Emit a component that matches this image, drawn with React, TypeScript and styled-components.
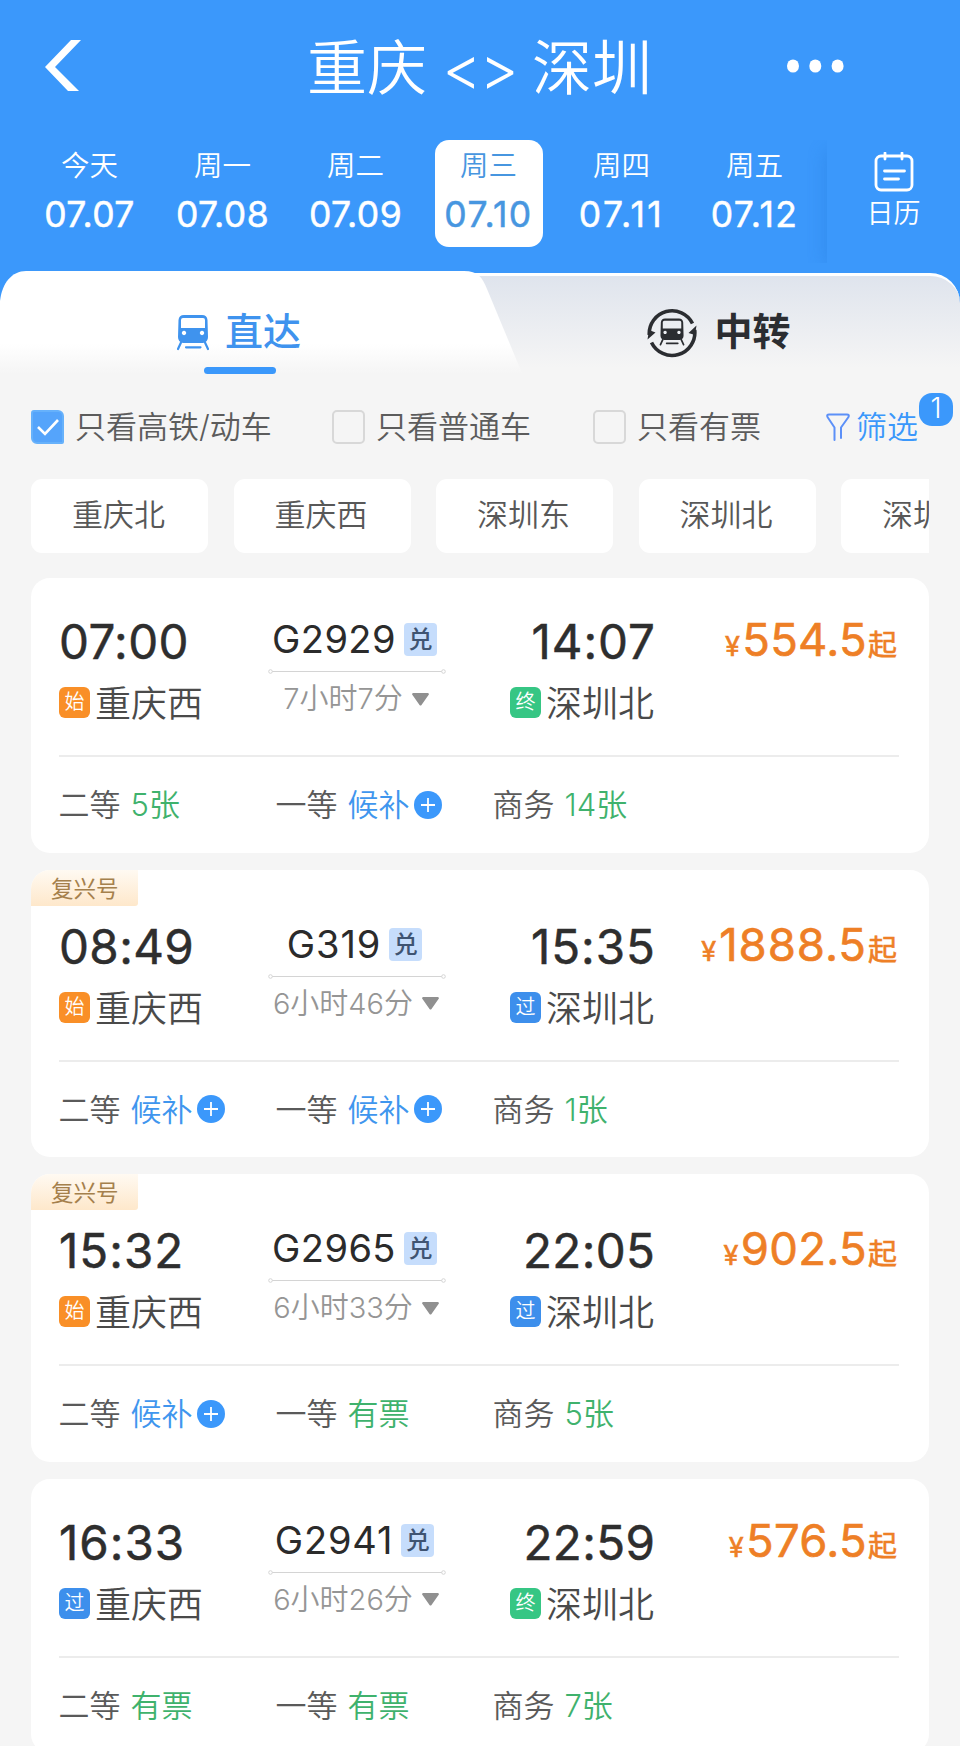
import React from 'react';
import styled, { createGlobalStyle, css } from 'styled-components';

const BLUE = '#3b98fb';
const PAGE = '#f5f5f5';

const GlobalStyle = createGlobalStyle`
  *, *::before, *::after { box-sizing: border-box; }
  body {
    margin: 0;
    background: ${PAGE};
    font-family: Inter, 'Noto Sans CJK SC', sans-serif;
    font-weight: 350;
    white-space: nowrap;
  }
  svg { display: block; flex: none; }
`;

/* The numeral 1 is narrow, so numbers that hold it get a little more tracking. */
const tracking = (text: string, base: number, perOne: number) =>
  base + ((text.split('1').length - 1) * perOne) / text.length;

const Page = styled.div`
  width: 960px;
  height: 1746px;
  overflow: hidden;
  background: ${PAGE};
`;

/* ---------- header ---------- */

const Header = styled.header`
  height: 271px;
  background: ${BLUE};
  color: #fff;
`;

const TitleBar = styled.div`
  display: grid;
  grid-template-columns: 190px 1fr 190px;
  align-items: center;
  height: 132px;
  padding: 0 45px;
`;

const Title = styled.h1`
  display: flex;
  justify-content: center;
  align-items: center;
  margin: 4px 0 0 -1px;
  font-size: 60px;
  font-weight: 350;
  line-height: 80px;
`;

const Swap = styled.span`
  width: 105px;
  text-align: center;
  font-size: 60px;
  letter-spacing: -2px;
`;

const MoreSlot = styled.div`
  display: flex;
  justify-content: flex-end;
  padding-right: 71px;
`;

const DateBar = styled.div`
  display: flex;
  padding: 8px 0 0 23px;
`;

const DayCell = styled.div`
  display: flex;
  justify-content: center;
  width: 133px;
`;

const Day = styled.div<{ $active?: boolean }>`
  width: 108px;
  height: 107px;
  padding-top: 4px;
  border-radius: 14px;
  text-align: center;
  ${(p) => p.$active && css`
    background: #fff;
    color: #4796e0;
  `}
`;

const DayName = styled.div`
  font-size: 28.5px;
  line-height: 44px;
`;

const DayDate = styled.div<{ $tracking: number }>`
  font-size: 35.5px;
  font-weight: 400;
  -webkit-text-stroke: 0.5px currentColor;
  line-height: 54px;
  letter-spacing: ${(p) => p.$tracking}px;
`;

const Calendar = styled.div`
  display: flex;
  flex-direction: column;
  align-items: center;
  gap: 2px;
  flex: 1;
  height: 123px;
  margin-left: 6px;
  padding-top: 12px;
  box-shadow: -6px 6px 16px -4px rgba(30, 110, 210, 0.28);
  clip-path: inset(0 0 0 -24px);
  font-size: 27px;
  line-height: 40px;
`;

/* ---------- tabs ---------- */

const TabBar = styled.nav`
  position: relative;
  display: grid;
  grid-template-columns: 1fr 1fr;
  height: 107px;
  background: linear-gradient(${BLUE} 0 42px, ${PAGE} 42px);
`;

const Tab = styled.div<{ $active?: boolean }>`
  position: relative;
  display: flex;
  justify-content: center;
  align-items: center;
  gap: ${(p) => (p.$active ? 16 : 17)}px;
  height: 114px;
  padding-right: 2px;
  font-size: 38px;
  font-weight: ${(p) => (p.$active ? 500 : 700)};
  color: ${(p) => (p.$active ? '#3f93ee' : '#2b2d31')};

  & > * { position: relative; z-index: 2; }
  & > svg { margin-top: 9px; }

  &::before {
    content: '';
    position: absolute;
    top: 0;
    height: 107px;
    ${(p) => p.$active
      ? css`
          left: 0;
          z-index: 1;
          width: 530px;
          background: linear-gradient(#fff 0 68%, ${PAGE} 96%);
          clip-path: path('M0 30 C2 12 12 0 26 0 H464 C478 0 482 6 487 18 L524 107 H0 Z');
        `
      : css`
          top: 2px;
          left: -60px;
          right: 0;
          height: 105px;
          border-top: 3px solid #fff;
          border-radius: 0 30px 0 0;
          background: linear-gradient(#dfe4ed, ${PAGE} 90%);
        `}
  }
`;

const TabUnderline = styled.span`
  && {
    position: absolute;
    left: 204px;
    top: 96px;
    width: 72px;
    height: 7px;
    border-radius: 4px;
    background: ${BLUE};
  }
`;

/* ---------- filters ---------- */

const FilterRow = styled.div`
  display: grid;
  grid-template-columns: 301px 261px 233px auto;
  align-items: center;
  height: 40px;
  margin-top: 29px;
  padding-left: 31px;
  font-size: 31px;
  line-height: 40px;
  color: #5c5c5c;
`;

const Option = styled.label`
  display: flex;
  align-items: center;
  gap: 11px;
`;

const CheckBox = styled.span<{ $checked?: boolean }>`
  display: flex;
  justify-content: center;
  align-items: center;
  width: 33px;
  height: 34px;
  border: 2px solid ${(p) => (p.$checked ? '#66b1fb' : '#d8d8d8')};
  border-radius: ${(p) => (p.$checked ? '3px 6px 2px 6px' : '5px')};
  background: ${(p) => (p.$checked ? '#55a4fb' : 'transparent')};
`;

const FilterButton = styled.div`
  position: relative;
  display: flex;
  align-items: center;
  gap: 6px;
  width: 94px;
  color: ${BLUE};
`;

const CountBadge = styled.span`
  position: absolute;
  left: 93px;
  top: -14px;
  width: 34px;
  height: 33px;
  border-radius: 13px;
  background: ${BLUE};
  color: #fff;
  font-size: 28px;
  line-height: 30px;
  text-align: center;
`;

const Stations = styled.div`
  display: flex;
  gap: 25.5px;
  margin: 32px 31px 0;
  overflow: hidden;
`;

const StationChip = styled.div`
  flex: none;
  width: 177px;
  height: 74px;
  padding-left: 41px;
  border-radius: 11px;
  background: #fff;
  font-size: 31px;
  line-height: 71px;
  color: #585858;
`;

/* ---------- train cards ---------- */

const TrainList = styled.main`
  display: flex;
  flex-direction: column;
  gap: 17px;
  margin: 25px 31px 0;
`;

const Card = styled.article<{ $tagged?: boolean }>`
  flex: none;
  height: ${(p) => (p.$tagged ? 287.6 : 274.5)}px;
  border-radius: 19px;
  background: #fff;
  overflow: hidden;
`;

const SeriesTag = styled.div`
  width: 107px;
  height: 36px;
  margin-bottom: -23px;
  padding-left: 20px;
  border-radius: 0 0 3px 0;
  background: linear-gradient(#fffaf2, #fee8cb);
  color: #a5804c;
  font-size: 22.5px;
  font-weight: 400;
  line-height: 37px;
`;

const Trip = styled.div`
  display: grid;
  grid-template-columns: 209px 178px 209px 1fr;
  height: 177px;
  margin: 0 30px 0 28px;
`;

const Stop = styled.div<{ $end?: boolean }>`
  display: flex;
  flex-direction: column;
  align-items: ${(p) => (p.$end ? 'flex-end' : 'flex-start')};
  gap: 12px;
  padding-top: 36px;
`;

const Time = styled.div<{ $tracking: number }>`
  margin-right: ${(p) => -p.$tracking}px;
  font-size: 47.5px;
  font-weight: 400;
  -webkit-text-stroke: 0.5px currentColor;
  line-height: 56px;
  letter-spacing: ${(p) => p.$tracking}px;
  color: #2e2e2e;
`;

const StopName = styled.div`
  display: flex;
  align-items: center;
  gap: 5px;
  margin-right: 1px;
  font-size: 36px;
  line-height: 40px;
  color: #4a4a4a;

  & > span:last-child { padding-top: 2px; }
`;

const stopColors = { 始: '#f98f27', 终: '#36c684', 过: '#3d8fec' };
type StopKind = keyof typeof stopColors;

const StopBadge = styled.span<{ $kind: StopKind }>`
  width: 31px;
  height: 31px;
  margin-top: -1px;
  border-radius: 6px;
  background: ${(p) => stopColors[p.$kind]};
  color: #fff;
  font-size: 20px;
  line-height: 31px;
  text-align: center;
`;

const Middle = styled.div`
  display: flex;
  flex-direction: column;
  align-items: center;
  padding-top: 39px;
`;

const TrainNo = styled.div`
  display: flex;
  align-items: center;
  gap: 8px;
  margin-right: 5px;
  font-size: 38px;
  font-weight: 400;
  line-height: 45px;
  color: #2b2b2b;
`;

const TrainCode = styled.span<{ $tracking: number }>`
  letter-spacing: ${(p) => p.$tracking}px;
`;

const Exchange = styled.span`
  width: 33px;
  height: 33px;
  border-radius: 4px;
  background: #c6ddfc;
  color: #3f5472;
  font-size: 24px;
  font-weight: 500;
  line-height: 34px;
  text-align: center;
`;

const RouteLine = styled.svg`
  margin: 7px 0 7px;
`;

const Duration = styled.div`
  display: flex;
  align-items: center;
  gap: 9px;
  margin-right: 2px;
  font-size: 29px;
  line-height: 36px;
  color: #959595;
`;

const Price = styled.div<{ $tracking: number }>`
  padding: 37px 2px 0 0;
  text-align: right;
  font-size: 45.5px;
  font-weight: 400;
  -webkit-text-stroke: 0.6px currentColor;
  line-height: 49px;
  letter-spacing: ${(p) => p.$tracking}px;
  color: #ee7f26;
`;

const Currency = styled.small`
  margin-right: 2px;
  font-size: 27px;
`;

const From = styled.small`
  margin-left: 1px;
  font-size: 29px;
  letter-spacing: 0;
`;

const Seats = styled.div`
  display: grid;
  grid-template-columns: 217px 217px 1fr;
  margin: 0 30px 0 28px;
  padding-top: 28px;
  border-top: 2px solid #ececec;
  font-size: 31px;
  line-height: 39px;
  color: #5a5a5a;
`;

const Seat = styled.div`
  display: flex;
  align-items: center;
  margin-left: -0.5px;
`;

const SeatState = styled.span<{ $waiting?: boolean }>`
  margin: 0 4px 0 10px;
  color: ${(p) => (p.$waiting ? '#3f96ee' : '#3fb26d')};
`;

/* ---------- icons ---------- */

const BackIcon = () => (
  <svg width="36" height="52" viewBox="0 0 36 52" fill="#fff">
    <path d="M26 0h10L10 27l24 24H23L0 27z" />
  </svg>
);

const MoreIcon = () => (
  <svg width="57" height="14" viewBox="0 0 57 14" fill="#fff">
    <ellipse cx="6" cy="7" rx="6" ry="6.6" />
    <ellipse cx="28.3" cy="7" rx="6" ry="6.6" />
    <ellipse cx="50.6" cy="7" rx="6" ry="6.6" />
  </svg>
);

const CalendarIcon = () => (
  <svg width="40" height="40" viewBox="0 0 40 40" fill="none" stroke="#fff" strokeWidth="2.8" strokeLinecap="round">
    <rect x="2" y="4" width="36" height="34" rx="5" />
    <path d="M11 1v6M28 1v6M10.500 19h20M10.500 27h14" />
  </svg>
);

const TrainShape = () => (
  <>
    <path
      fillRule="evenodd"
      d="M7 0H25Q30 0 30.500 5L31 22Q31 27 26 28H6Q1 27 1 22L1.500 5Q2 0 7 0ZM6 3Q4 3 4 5V13H28V5Q28 3 26 3ZM7 15.800a2.200 2.200 0 1 0 .01 0ZM25 15.800a2.200 2.200 0 1 0 .01 0Z"
    />
    <path d="M4 27.500 1 34M28 27.500l3 6.500M9 32.300h14.500" fill="none" stroke="currentColor" strokeWidth="2.200" strokeLinecap="round" />
  </>
);

const TrainIcon = () => (
  <svg width="32" height="36" viewBox="0 0 32 36" fill="currentColor">
    <TrainShape />
  </svg>
);

const TransferIcon = () => (
  <svg width="50" height="50" viewBox="0 0 50 50" fill="currentColor">
    <path d="M2.300 27A22.800 22.800 0 0 1 45.500 15.500M4.500 34.500A22.800 22.800 0 0 0 47.700 22" fill="none" stroke="currentColor" strokeWidth="3.600" />
    <path d="M.5 31.500 8.500 24.500 2 22ZM49.500 17.500 41.500 25l6.500 2Z" />
    <g transform="translate(12.700 10.500) scale(0.770)">
      <TrainShape />
    </g>
  </svg>
);

const CheckIcon = () => (
  <svg width="24" height="20" viewBox="0 0 24 20" fill="none" stroke="#fff" strokeWidth="2.600">
    <path d="M2 10l7 7L22 3" />
  </svg>
);

const FunnelIcon = () => (
  <svg width="24" height="28" viewBox="0 0 24 28" fill="none" stroke="#5c90f8" strokeWidth="2" strokeLinecap="round" strokeLinejoin="round">
    <path d="M8.500 27V14.500L1.500 4Q.5 1.500 3 1.500H21Q23.500 1.500 22.500 4L15 14.500V25" />
  </svg>
);

const PlusIcon = () => (
  <svg width="28" height="28" viewBox="0 0 28 28">
    <circle cx="14" cy="14" r="14" fill={BLUE} />
    <path d="M14 7v14M7 14h14" stroke="#fff" strokeWidth="1.800" />
  </svg>
);

const DownIcon = () => (
  <svg width="17" height="13" viewBox="0 0 17 13" fill="#909090">
    <path d="M1 0H16Q17.500 1 16.500 2L9.500 12Q8.500 13 7.500 12L.5 2Q-.5 1 1 0Z" />
  </svg>
);

/* ---------- data ---------- */

const days = [
  ['今天', '07.07'],
  ['周一', '07.08'],
  ['周二', '07.09'],
  ['周三', '07.10'],
  ['周四', '07.11'],
  ['周五', '07.12'],
];

const stations = ['重庆北', '重庆西', '深圳东', '深圳北', '深圳'];

interface Train {
  no: string;
  tagged?: boolean;
  from: [string, StopKind];
  to: [string, StopKind];
  duration: string;
  price: string;
  seats: [string, string][];
}

const trains: Train[] = [
  { no: 'G2929', from: ['07:00', '始'], to: ['14:07', '终'], duration: '7小时7分', price: '554.5', seats: [['二等', '5张'], ['一等', '候补'], ['商务', '14张']] },
  { no: 'G319', tagged: true, from: ['08:49', '始'], to: ['15:35', '过'], duration: '6小时46分', price: '1888.5', seats: [['二等', '候补'], ['一等', '候补'], ['商务', '1张']] },
  { no: 'G2965', tagged: true, from: ['15:32', '始'], to: ['22:05', '过'], duration: '6小时33分', price: '902.5', seats: [['二等', '候补'], ['一等', '有票'], ['商务', '5张']] },
  { no: 'G2941', from: ['16:33', '过'], to: ['22:59', '终'], duration: '6小时26分', price: '576.5', seats: [['二等', '有票'], ['一等', '有票'], ['商务', '7张']] },
];

const StopColumn = ({ stop, name, end }: { stop: [string, StopKind]; name: string; end?: boolean }) => (
  <Stop $end={end}>
    <Time $tracking={tracking(stop[0], 0.4, 3)}>{stop[0]}</Time>
    <StopName><StopBadge $kind={stop[1]}>{stop[1]}</StopBadge><span>{name}</span></StopName>
  </Stop>
);

const TrainCard = ({ train }: { train: Train }) => (
  <Card $tagged={train.tagged}>
    {train.tagged && <SeriesTag>复兴号</SeriesTag>}
    <Trip>
      <StopColumn stop={train.from} name="重庆西" />
      <Middle>
        <TrainNo>
          <TrainCode $tracking={tracking(train.no, 0.4, 2)}>{train.no}</TrainCode>
          <Exchange>兑</Exchange>
        </TrainNo>
        <RouteLine width="178" height="5" viewBox="0 0 178 5" fill="#fff" stroke="#d4d4d4">
          <path d="M4 2.500H174" />
          <circle cx="2.500" cy="2.500" r="1.800" />
          <circle cx="175.500" cy="2.500" r="1.800" />
        </RouteLine>
        <Duration>{train.duration}<DownIcon /></Duration>
      </Middle>
      <StopColumn stop={train.to} name="深圳北" end />
      <Price $tracking={tracking(train.price, 0.3, 4)}>
        <Currency>¥</Currency>{train.price}<From>起</From>
      </Price>
    </Trip>
    <Seats>
      {train.seats.map(([name, state]) => (
        <Seat key={name}>
          {name}
          <SeatState $waiting={state === '候补'}>{state}</SeatState>
          {state === '候补' && <PlusIcon />}
        </Seat>
      ))}
    </Seats>
  </Card>
);

export default function App() {
  return (
    <Page>
      <GlobalStyle />
      <Header>
        <TitleBar>
          <BackIcon />
          <Title>重庆<Swap>&lt;&gt;</Swap>深圳</Title>
          <MoreSlot><MoreIcon /></MoreSlot>
        </TitleBar>
        <DateBar>
          {days.map(([name, date]) => (
            <DayCell key={date}>
              <Day $active={date === '07.10'}>
                <DayName>{name}</DayName>
                <DayDate $tracking={tracking(date, 0.4, 5)}>{date}</DayDate>
              </Day>
            </DayCell>
          ))}
          <Calendar><CalendarIcon />日历</Calendar>
        </DateBar>
      </Header>
      <TabBar>
        <Tab $active><TrainIcon /><span>直达</span><TabUnderline /></Tab>
        <Tab><TransferIcon /><span>中转</span></Tab>
      </TabBar>
      <FilterRow>
        <Option><CheckBox $checked><CheckIcon /></CheckBox>只看高铁/动车</Option>
        <Option><CheckBox />只看普通车</Option>
        <Option><CheckBox />只看有票</Option>
        <FilterButton><FunnelIcon />筛选<CountBadge>1</CountBadge></FilterButton>
      </FilterRow>
      <Stations>
        {stations.map((s) => <StationChip key={s}>{s}</StationChip>)}
      </Stations>
      <TrainList>
        {trains.map((t) => <TrainCard key={t.no} train={t} />)}
      </TrainList>
    </Page>
  );
}
